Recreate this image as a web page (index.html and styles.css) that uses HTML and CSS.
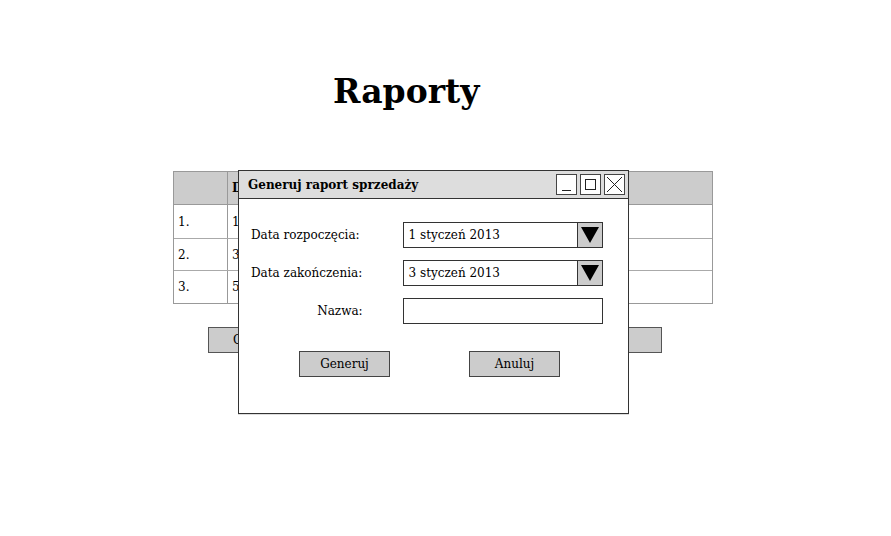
FILE: index.html
```html
<!DOCTYPE html>
<html lang="pl">
<head>
<meta charset="utf-8">
<title>Raporty</title>
<link rel="stylesheet" href="styles.css">
</head>
<body>
<div class="page">
  <h1 class="title">Raporty</h1>
  <div class="stage">
    <div class="table">
      <div class="row head"><div class="c1"></div><div class="c2">Data</div><div class="c3"></div></div>
      <div class="row r1"><div class="c1">1.</div><div class="c2">1</div><div class="c3"></div></div>
      <div class="row r2"><div class="c1">2.</div><div class="c2">3</div><div class="c3"></div></div>
      <div class="row r3"><div class="c1">3.</div><div class="c2">5</div><div class="c3"></div></div>
    </div>
    <div class="bgbuttons">
      <div class="bgbtn">Generuj</div>
      <div class="bgbtn right">Drukuj</div>
    </div>

    <div class="dialog">
      <div class="titlebar">
        <span class="dtitle">Generuj raport sprzedaży</span>
        <div class="winbtns">
          <div class="wb"><svg width="19" height="19" viewBox="0 0 19 19"><path d="M5 15.5h9" stroke="#222" stroke-width="1"/></svg></div>
          <div class="wb"><svg width="19" height="19" viewBox="0 0 19 19"><rect x="4.5" y="4.5" width="10" height="10" fill="none" stroke="#222" stroke-width="1"/></svg></div>
          <div class="wb"><svg width="19" height="19" viewBox="0 0 19 19"><path d="M2 2L17 17M17 2L2 17" stroke="#222" stroke-width="1"/></svg></div>
        </div>
      </div>
      <div class="dbody">
        <div class="field">
          <label class="lbl">Data rozpoczęcia:</label>
          <div class="combo"><span class="val">1 styczeń 2013</span><span class="arrow"><svg width="18" height="16" viewBox="0 0 18 16"><path d="M0 0H18L9 16Z" fill="#000"/></svg></span></div>
        </div>
        <div class="field">
          <label class="lbl">Data zakończenia:</label>
          <div class="combo"><span class="val">3 styczeń 2013</span><span class="arrow"><svg width="18" height="16" viewBox="0 0 18 16"><path d="M0 0H18L9 16Z" fill="#000"/></svg></span></div>
        </div>
        <div class="field">
          <label class="lbl rt">Nazwa:</label>
          <div class="input"></div>
        </div>
        <div class="actions">
          <div class="btn">Generuj</div>
          <div class="btn">Anuluj</div>
        </div>
      </div>
    </div>
  </div>
</div>
</body>
</html>
```

FILE: styles.css
```css
* { box-sizing: border-box; }
html, body { margin: 0; padding: 0; background: #fff; }
body { font-family: "DejaVu Serif", serif; color: #000; width: 891px; height: 536px; overflow: hidden; }
.page { padding-top: 72px; }
.title { margin: 0 0 0 333px; font-size: 33px; font-weight: bold; line-height: 40px; height: 40px; }
.stage { position: relative; margin-top: 59px; margin-left: 173px; width: 540px; }
.table { width: 540px; border: 1px solid #999; font-size: 12px; }
.row { display: flex; border-top: 1px solid #aaa; }
.row.head { border-top: none; background: #ccc; height: 33px; border-bottom: 1px solid #999; }
.row.r1 { border-top: none; height: 33px; }
.row.r2 { height: 32px; }
.row.r3 { height: 33px; }
.c1 { width: 54px; border-right: 1px solid #999; padding-left: 4px; display: flex; align-items: center; }
.c2 { width: 60px; padding-left: 4px; display: flex; align-items: center; }
.head .c2 { font-weight: bold; }
.c3 { flex: 1; }
.bgbuttons { display: flex; justify-content: space-between; margin: 23px 51px 0 35px; }
.bgbtn { width: 100px; height: 26px; background: #ccc; border: 1px solid #555; font-size: 12px; display: flex; align-items: center; padding-left: 24px; }
.bgbtn.right { padding-left: 8px; }
.dialog { position: absolute; left: 65px; top: -1px; width: 391px; height: 244px; border: 1px solid #333; background: #fff; box-shadow: 0 1px 0 #ddd; }
.titlebar { height: 28px; background: #ddd; border-bottom: 1px solid #333; display: flex; align-items: center; justify-content: space-between; padding: 0 3px 0 9px; }
.dtitle { font-size: 12px; font-weight: bold; }
.winbtns { display: flex; gap: 3px; }
.wb { width: 21px; height: 21px; border: 1px solid #444; background: #fff; display: flex; align-items: center; justify-content: center; }
.dbody { padding: 23px 25px 0 12px; font-size: 12px; }
.field { display: flex; align-items: center; height: 26px; margin-bottom: 12px; }
.lbl { width: 152px; }
.lbl.rt { text-align: right; padding-right: 40px; }
.field:nth-child(3) { margin-top: 2px; }
.combo { width: 201px; height: 26px; border: 1px solid #333; display: flex; align-items: stretch; }
.val { flex: 1; display: flex; align-items: center; padding-left: 5px; }
.arrow { width: 25px; background: #ccc; border-left: 1px solid #333; display: flex; align-items: center; justify-content: center; }
.input { width: 201px; height: 26px; border: 1px solid #333; }
.actions { display: flex; gap: 79px; margin-top: 27px; padding-left: 48px; }
.btn { width: 91px; height: 26px; background: #ccc; border: 1px solid #444; display: flex; align-items: center; justify-content: center; }
```
